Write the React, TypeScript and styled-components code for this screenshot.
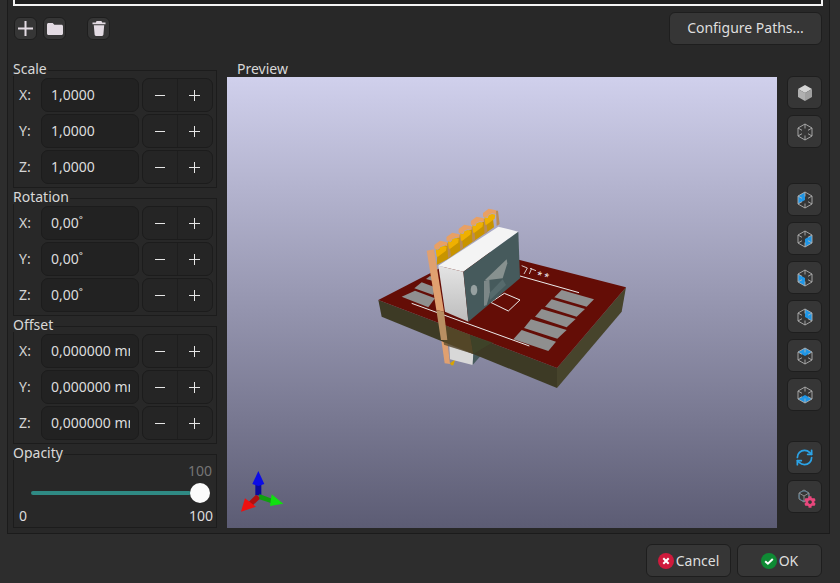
import React from "react";
import styled, { createGlobalStyle } from "styled-components";
import { FaCog } from "react-icons/fa";
import { RefreshCw } from "lucide-react";

const Global = createGlobalStyle`
  html, body { margin: 0; padding: 0; background: #2d2d2d; }
  #root { width: 840px; height: 583px; overflow: hidden; }
  * { box-sizing: border-box; }
`;

const Page = styled.div`
  width: 840px; height: 583px; display: flex; flex-direction: column; background: #2d2d2d;
  color: #dcdcdc; font: 14px/14px "Noto Sans", "Open Sans", sans-serif; overflow: hidden;
`;
const Panel = styled.div`
  width: 823px; height: 534px; margin-left: 7px; padding: 0 7px 0 5px; background: #282828;
  border: 1px solid #1b1b1b; border-top: none; display: flex; flex-direction: column;
`;
const PathBox = styled.div`
  height: 6px; width: 810px; border: 2px solid #f4f4f4; border-top: none; background: #1f1f1f; flex: none;
`;
const Toolbar = styled.div`
  height: 33px; margin-top: 6px; display: flex; align-items: center; padding-left: 1px; flex: none;
`;
const BaseButton = styled.div`
  background: #363636; border: 1px solid #1e1e1e; border-radius: 6px; display: flex;
  align-items: center; justify-content: center; flex: none;
`;
const SmallButton = styled(BaseButton)<{ $gap?: number }>`
  width: 23px; height: 23px; margin-right: ${(p) => p.$gap ?? 6}px;
`;
const ConfigureButton = styled(BaseButton)`
  width: 153px; height: 33px; margin-left: auto; padding-bottom: 1px; font-size: 14px; color: #dedede;
`;
const Main = styled.div`
  display: flex; margin-top: 17px; flex: none;
`;
const LeftColumn = styled.div`
  width: 204px; display: flex; flex-direction: column; gap: 2px; flex: none;
`;
const Group = styled.div`
  display: flex; flex-direction: column;
`;
const GroupTitle = styled.div`
  align-self: flex-start; height: 14px; line-height: 14px; margin-bottom: -6px; padding-right: 1px;
  background: #282828; position: relative; z-index: 1; color: #d8d8d8;
`;
const Frame = styled.div`
  border: 1px solid #1c1c1c; height: 118px; padding: 7px 3px 0 5px; display: flex; flex-direction: column; gap: 2px;
`;
const Row = styled.div`
  height: 34px; display: flex; align-items: center;
`;
const AxisLabel = styled.div`
  width: 22px; flex: none; color: #d4d4d4;
`;
const ValueInput = styled.input`
  width: 98px; height: 34px; background: #222222; border: 1px solid #1c1c1c; border-radius: 7px;
  color: #dcdcdc; font: inherit; padding: 0 8px 2px 9px; outline: none; flex: none;
`;
const Stepper = styled.div`
  width: 71px; height: 34px; margin-left: 3px; display: flex; background: #252525;
  border: 1px solid #1c1c1c; border-radius: 7px; flex: none;
`;
const StepCell = styled.div<{ $divider?: boolean }>`
  flex: 1; display: flex; align-items: center; justify-content: center;
  padding-right: ${(p) => (p.$divider ? "1px" : "0")};
  border-left: ${(p) => (p.$divider ? "1px solid #1e1e1e" : "none")};
`;
const OpacityFrame = styled.div`
  border: 1px solid #1c1c1c; height: 74px; padding: 9px 3px 0 5px; display: flex; flex-direction: column;
`;
const MutedValue = styled.div`
  align-self: flex-end; color: #757575; margin-right: 1px;
`;
const SliderRow = styled.div`
  height: 20px; margin-top: 5px; display: flex; align-items: center; padding-left: 12px; padding-right: 3px;
`;
const SliderTrack = styled.div`
  flex: 1; height: 4px; background: #2f8a84; border-radius: 2px; margin-right: -1px;
`;
const SliderKnob = styled.div`
  width: 20px; height: 20px; border-radius: 50%; background: #fbfbfb; flex: none; position: relative;
`;
const RangeLabels = styled.div`
  display: flex; justify-content: space-between; margin-top: 6px;
`;
const PreviewColumn = styled.div`
  width: 550px; margin-left: 10px; flex: none; display: flex; flex-direction: column;
`;
const PreviewTitle = styled.div`
  height: 15px; padding-left: 10px; color: #d8d8d8;
`;
const Viewport = styled.div`
  width: 550px; height: 451px; background: linear-gradient(180deg, #d0d0ec 0%, #5c5c74 100%);
`;
const ViewSvg = styled.svg`
  display: block; width: 550px; height: 451px;
`;
const SideColumn = styled.div`
  margin-left: 10px; padding-top: 14px; display: flex; flex-direction: column; flex: none;
`;
const SideGroup = styled.div<{ $top?: number }>`
  display: flex; flex-direction: column; gap: 6px; margin-top: ${(p) => p.$top ?? 0}px;
`;
const SideButton = styled(BaseButton)`
  width: 35px; height: 33px; position: relative;
`;
const GearBadge = styled.span`
  position: absolute; left: 16px; top: 15px; width: 12px; height: 12px; display: flex; color: #e8477c;
`;
const Footer = styled.div`
  display: flex; justify-content: flex-end; gap: 6px; padding: 10px 18px 0 0;
`;
const DialogButton = styled(BaseButton)`
  width: 85px; height: 33px; gap: 2px; font-size: 14px; color: #dedede;
`;

const PlusSmall = () => (
  <svg width="11" height="11" viewBox="0 0 11 11" shapeRendering="crispEdges">
    <path d="M0 5h11v1H0zM5 0h1v11H5z" fill="#e6e6e6" />
  </svg>
);
const MinusSmall = () => (
  <svg width="10" height="11" viewBox="0 0 10 11" shapeRendering="crispEdges">
    <path d="M0 5h10v1H0z" fill="#e6e6e6" />
  </svg>
);

const ToolPlus = () => (
  <svg width="15" height="15" viewBox="0 0 15 15"><path d="M6.5 0h2v6.5H15v2H8.5V15h-2V8.5H0v-2h6.5z" fill="#e3dbe3" /></svg>
);
const ToolFolder = () => (
  <svg width="16" height="14" viewBox="0 0 16 14"><path d="M1.5 1h4.2l1.6 1.8h7.2c.8 0 1.5.7 1.5 1.5v7.2c0 .8-.7 1.5-1.5 1.5h-13C.7 13 0 12.300 0 11.500v-9C0 1.700.7 1 1.500 1z" fill="#e3dbe3" /></svg>
);
const ToolTrash = () => (
  <svg width="14" height="15" viewBox="0 0 14 15"><path d="M4.500 0h5l.6 1.400H13.500v1.800H.5V1.400h3.400zM1.800 4.300h10.400l-.8 9.300c-.1.800-.6 1.400-1.400 1.400H4c-.8 0-1.300-.6-1.400-1.400z" fill="#e3dbe3" /></svg>
);

type Face = "none" | "backleft" | "right" | "left" | "back" | "top" | "bottom";
const facePoints: Record<Exclude<Face, "none">, string> = {
  backleft: "9,1 9,9 2,13 2,5",
  right: "16,5 9,9 9,17 16,13",
  left: "2,5 9,9 9,17 2,13",
  back: "9,1 16,5 16,13 9,9",
  top: "9,1 16,5 9,9 2,5",
  bottom: "9,9 16,13 9,17 2,13",
};
const CubeIcon = ({ face }: { face: Face }) => (
  <svg width="18" height="18" viewBox="0 0 18 18" fill="none">
    {face !== "none" && <polygon points={facePoints[face]} fill="#1f96e6" />}
    <g stroke="#b0b0b0" strokeWidth="0.9" strokeLinejoin="round">
      <polygon points="9,1 16,5 16,13 9,17 2,13 2,5" />
      <path d="M2 5l4 2.300M16 5l-4 2.300M9 17v-4.500M2 13l4-2.300M16 13l-4-2.300M9 1v4.500" />
    </g>
  </svg>
);
const SolidCube = () => (
  <svg width="18" height="18" viewBox="0 0 18 18">
    <polygon points="9,1 16,5 9,9 2,5" fill="#d4d4d4" />
    <polygon points="2,5 9,9 9,17 2,13" fill="#b0b0b0" />
    <polygon points="16,5 9,9 9,17 16,13" fill="#a0a0a0" />
  </svg>
);
const ModelIcon = () => (
  <svg width="18" height="18" viewBox="0 0 18 18" fill="none" stroke="#8d8d8d" strokeWidth="1">
    <polygon points="8,2 13,5 13,11 8,14 3,11 3,5" />
    <circle cx="8" cy="8" r="5" stroke="#5a7f95" />
    <path d="M3 5l5 3 5-3M8 8v6" />
  </svg>
);
const StatusIcon = ({ color, kind }: { color: string; kind: "x" | "check" }) => (
  <svg width="16" height="16" viewBox="0 0 16 16">
    <circle cx="8" cy="8" r="8" fill={color} />
    {kind === "x" ? (
      <path d="M5.300 5.300l5.400 5.400M10.700 5.300l-5.400 5.400" stroke="#fff" strokeWidth="2" />
    ) : (
      <path d="M4.200 8.200l2.700 2.500 4.900-4.700" stroke="#fff" strokeWidth="2" fill="none" />
    )}
  </svg>
);

const AxisRow = ({ axis, value }: { axis: string; value: string }) => (
  <Row>
    <AxisLabel>{axis}:</AxisLabel>
    <ValueInput readOnly value={value} />
    <Stepper>
      <StepCell><MinusSmall /></StepCell>
      <StepCell $divider><PlusSmall /></StepCell>
    </Stepper>
  </Row>
);

const TripleGroup = ({ title, value }: { title: string; value: string }) => (
  <Group>
    <GroupTitle>{title}</GroupTitle>
    <Frame>
      {["X", "Y", "Z"].map((a) => <AxisRow key={a} axis={a} value={value} />)}
    </Frame>
  </Group>
);

const teeth = [0, 1, 2, 3, 4];

const Scene = () => (
  <g transform="translate(370 200) scale(0.33333)">
    <defs>
      <linearGradient id="whiteFace" x1="0" y1="0" x2="0" y2="1">
        <stop offset="0" stopColor="#e4e4e4" />
        <stop offset="1" stopColor="#bdbdbd" />
      </linearGradient>
    </defs>
    {/* connector below the board */}
    <polygon points="214,420 232,420 240,492 224,490" fill="#e0a070" />
    <polygon points="240,490 256,478 250,496 244,496" fill="#d9a400" />
    <polygon points="238,438 310,462 308,495 240,478" fill="#d8d8d8" />
    <polygon points="310,462 366,428 308,495" fill="#465a5c" />
    {/* board */}
    <polygon points="25,300 561,504 561,564 35,350" fill="#3d3a25" />
    <polygon points="561,504 768,262 755,335 561,564" fill="#47442c" />
    <polygon points="25,300 321,147 768,262 561,504" fill="#640d06" />
    {/* translucent through board */}
    <polygon points="214,372 300,404 310,462 240,440 222,434" fill="#5b4b28" opacity="0.75" />
    <polygon points="300,404 375,430 366,428 310,462" fill="#3f4529" opacity="0.8" />
    {/* pads */}
    <g fill="#8f8f8f">
      <polygon points="575,270 672,298 650,320 553,292" />
      <polygon points="545,298 645,327 620,350 525,320" />
      <polygon points="515,327 617,357 590,382 495,350" />
      <polygon points="483,358 590,390 562,416 462,384" />
      <polygon points="455,390 558,425 535,453 430,418" />
      <polygon points="95,290 135,272 195,295 175,322" />
      <polygon points="133,265 155,247 195,262 190,285" />
      <polygon points="168,237 180,228 195,235 190,243" />
    </g>
    <g stroke="#ececec" strokeWidth="3" fill="none">
      <path d="M125 310L478 438" />
      <path d="M450 228L627 278" />
      <polygon points="362,307 403,280 450,300 415,333" />
      <path d="M455 197L472 204L462 222M480 205L498 212M485 205L478 222" strokeWidth="2.500" />
    </g>
    <text x="0" y="0" fontFamily="Liberation Sans, sans-serif" fontSize="36" letterSpacing="8" fill="#ececec" transform="translate(498 236) rotate(14)">**</text>
    {/* gold strip */}
    <polygon points="200,195 203,150 368,48 372,82 232,178" fill="#c89400" />
    {teeth.map((i) => {
      const dx = i * 36.500;
      const dy = -i * 24;
      return (
        <g key={i} transform={`translate(${dx} ${dy})`}>
          <polygon points="197,148 207,150 210,142 220,138 230,140 228,152 204,170 200,170" fill="#efb000" />
          <polygon points="193,135 210,122 232,127 232,138 220,136 209,141 206,148 193,146" fill="#e8a064" />
          <polygon points="232,128 238,128 243,168 234,174" fill="#b98b55" />
        </g>
      );
    })}
    {/* body */}
    <polygon points="205,197 385,80 445,95 280,215" fill="#f4f4f4" />
    <polygon points="205,197 280,215 295,365 225,335" fill="url(#whiteFace)" />
    <polygon points="280,215 445,95 450,235 295,365" fill="#465a5c" />
    <polygon points="345,240 410,178 412,190 398,235 355,240" fill="#87918f" />
    <polygon points="342,243 358,238 360,280 350,315 342,318" fill="#7c8787" />
    <polygon points="358,280 398,238 408,255 360,300" fill="#566a6c" />
    <ellipse cx="312" cy="270" rx="10" ry="16" fill="#96a0a0" />
    {/* pin */}
    <polygon points="170,152 192,148 222,335 199,330" fill="#e0a070" />
    <polygon points="199,330 222,335 232,420 213,420" fill="#b98f62" />
  </g>
);

const Axes = () => (
  <g transform="translate(0 300) scale(0.33333)">
    <rect x="766" y="550" width="18" height="36" fill="#0a0a9a" />
    <polygon points="757,552 775,513 793,552 775,558" fill="#0c0ce6" />
    <polygon points="768,584 782,594 752,622 742,610" fill="#b01010" />
    <polygon points="723,635 735,595 768,620" fill="#ee1010" />
    <polygon points="778,582 820,598 815,610 778,598" fill="#10a010" />
    <polygon points="815,583 850,611 810,618" fill="#10e010" />
  </g>
);

export default function App() {
  return (
    <Page>
      <Global />
      <Panel>
        <PathBox />
        <Toolbar>
          <SmallButton><ToolPlus /></SmallButton>
          <SmallButton $gap={21}><ToolFolder /></SmallButton>
          <SmallButton><ToolTrash /></SmallButton>
          <ConfigureButton>Configure Paths...</ConfigureButton>
        </Toolbar>
        <Main>
          <LeftColumn>
            <TripleGroup title="Scale" value="1,0000" />
            <TripleGroup title="Rotation" value="0,00˚" />
            <TripleGroup title="Offset" value="0,000000 mm" />
            <Group>
              <GroupTitle>Opacity</GroupTitle>
              <OpacityFrame>
                <MutedValue>100</MutedValue>
                <SliderRow>
                  <SliderTrack />
                  <SliderKnob />
                </SliderRow>
                <RangeLabels><span>0</span><span>100</span></RangeLabels>
              </OpacityFrame>
            </Group>
          </LeftColumn>
          <PreviewColumn>
            <PreviewTitle>Preview</PreviewTitle>
            <Viewport>
              <ViewSvg viewBox="227 77 550 451">
                <Scene />
                <Axes />
              </ViewSvg>
            </Viewport>
          </PreviewColumn>
          <SideColumn>
            <SideGroup>
              <SideButton><SolidCube /></SideButton>
              <SideButton><CubeIcon face="none" /></SideButton>
            </SideGroup>
            <SideGroup $top={35}>
              <SideButton><CubeIcon face="backleft" /></SideButton>
              <SideButton><CubeIcon face="right" /></SideButton>
              <SideButton><CubeIcon face="left" /></SideButton>
              <SideButton><CubeIcon face="back" /></SideButton>
              <SideButton><CubeIcon face="top" /></SideButton>
              <SideButton><CubeIcon face="bottom" /></SideButton>
            </SideGroup>
            <SideGroup $top={30}>
              <SideButton><RefreshCw size={19} color="#2ba3e6" strokeWidth={2.2} /></SideButton>
              <SideButton>
                <ModelIcon />
                <GearBadge><FaCog size={12} /></GearBadge>
              </SideButton>
            </SideGroup>
          </SideColumn>
        </Main>
      </Panel>
      <Footer>
        <DialogButton><StatusIcon color="#cf1a3c" kind="x" />Cancel</DialogButton>
        <DialogButton><StatusIcon color="#0f8a34" kind="check" />OK</DialogButton>
      </Footer>
    </Page>
  );
}
